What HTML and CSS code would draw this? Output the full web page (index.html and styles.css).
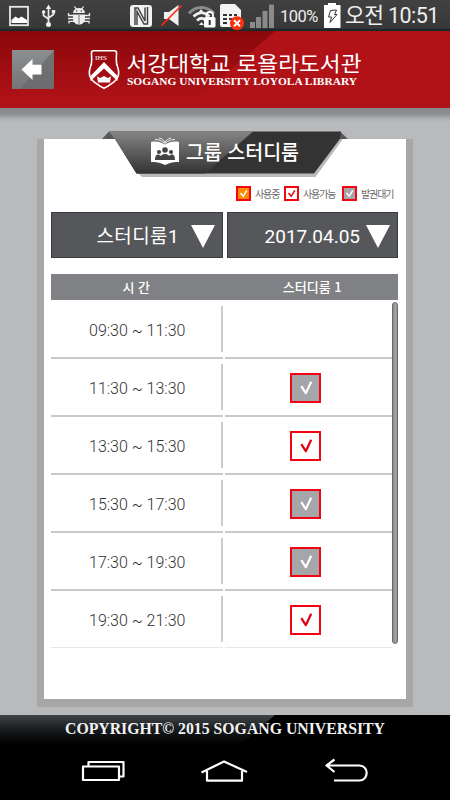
FILE: index.html
```html
<!DOCTYPE html>
<html lang="ko">
<head>
<meta charset="utf-8">
<title>그룹 스터디룸</title>
<link rel="stylesheet" href="styles.css">
</head>
<body>
<svg width="0" height="0" class="defs" aria-hidden="true">
  <symbol id="check" viewBox="0 0 31 30"><path d="M11.300 13.200l4.500 7 5.400-11.400" fill="none" stroke="currentColor" stroke-width="2.200" stroke-linejoin="round"/></symbol>
  <symbol id="check-sm" viewBox="0 0 15 15"><path d="M4.500 7l2.700 3.300 3.600-6" fill="none" stroke="currentColor" stroke-width="1.500"/></symbol>
</svg>
<div class="status">
  <svg class="i-pic" viewBox="9 0 20 31"><rect x="10" y="6.800" width="18" height="18.400" fill="none" stroke="#e8e8e8" stroke-width="1.800"/><path d="M11.500 23v-3l4-3.500 3 2 3-2 5.500 3.500v3z" fill="#fff"/></svg>
  <svg class="i-usb" viewBox="41 0 15 31"><g fill="none" stroke="#e8e8e8" stroke-width="1.700"><path d="M48.500 8v17M43.500 11v4.500l5 3.500M53.500 11v3.500l-5 3.500"/></g><path d="M48.500 4.500l2.700 4.500h-5.400z" fill="#eee"/><circle cx="48.500" cy="24.500" r="2.500" fill="#eee"/><circle cx="43.700" cy="12" r="1.800" fill="#eee"/><rect x="51.800" y="10" width="3.400" height="3.400" fill="#eee"/></svg>
  <svg class="i-bug" viewBox="67 0 24 31"><path d="M73 13a6 5 0 0 1 12 0zM73 14.500h12v4c0 8-12 8-12 0z" fill="#eee"/><path d="M74.500 6.500l2 3M83.500 6.500l-2 3M68.500 13v2.500h5M89.500 13v2.500h-5M68 18.500h22M69 23.500v-2.200h5M89 23.500v-2.200h-5" fill="none" stroke="#eee" stroke-width="1.300"/><path d="M79 15v9" stroke="#555" stroke-width=".8"/><circle cx="76.700" cy="11" r=".8" fill="#444"/><circle cx="81.300" cy="11" r=".8" fill="#444"/></svg>
  <svg class="i-nfc" viewBox="130 0 22 31"><rect x="130" y="5" width="22" height="22" rx="3" fill="#f2f2f2"/><path d="M135 25V8l3 0 7 13V7.500M147.500 7v17l-3.500 0-7-12.500V25" fill="none" stroke="#3c3c3c" stroke-width="1.400"/></svg>
  <svg class="i-mute" viewBox="160 0 23 31"><path d="M164 12h5l9.500-7v21l-9.500-7h-5z" fill="#f0f0f0"/><path d="M161.500 25.500l20-20" stroke="#ff2a16" stroke-width="1.700"/></svg>
  <svg class="i-wifi" viewBox="188 0 28 31"><g fill="none"><path d="M189 13.500c7-8 18-8 25 0" stroke="#8c8c8c" stroke-width="3"/><path d="M193.500 16.500c5-5 11-5 16 0M197 20.500c3-3 6-3 9 0" stroke="#eee" stroke-width="2.600"/></g><path d="M198 13l3-4 3 4zM199 25l2.500-3 2.500 3z" fill="#eee"/><rect x="204" y="17" width="11.500" height="10.500" rx="1.500" fill="#fff"/><path d="M206.500 17.500v-2.500c0-4 6.500-4 6.500 0v2.500" fill="none" stroke="#fff" stroke-width="1.800"/><path d="M209.700 20v5" stroke="#333" stroke-width="2"/></svg>
  <svg class="i-sim" viewBox="220 0 25 31"><path d="M222 4h13l6 6v17h-19a2 2 0 0 1-2-2V6a2 2 0 0 1 2-2z" fill="#f4f4f4"/><path d="M223 15h4M229 15h3M234 15h3M223 19h4M229 19h3M223 23h4" stroke="#333" stroke-width="2"/><circle cx="237" cy="23.300" r="7" fill="#f9300c"/><path d="M234 20.300l6 6M240 20.300l-6 6" stroke="#fff" stroke-width="2"/></svg>
  <svg class="i-signal" viewBox="250 0 24 31"><path d="M250 22h5v6h-5zM256 17h5v11h-5zM262.500 11h5v17h-5zM269 4.500h5V28h-5z" fill="#8a8a8a"/></svg>
  <span class="pct">100%</span>
  <svg class="i-bat" viewBox="324 0 17 31"><path d="M328 3h8v2h4.500v23H324V5h4z" fill="#fff"/><path d="M330.500 10.500l6-.5-2 4.500h2.500l-7 8 1.500-5.500h-3z" fill="none" stroke="#333" stroke-width="1"/></svg>
  <span class="clock">오전 10:51</span>
</div>
<header class="top">
  <button class="back" aria-label="뒤로"><svg viewBox="12 50 42 39"><path d="M54 50v39H20z" fill="#6a6a6c" opacity=".75"/><path d="M21.500 69.500l11-10.500v5.700h9v9.800h-9v5.500z" fill="#fff"/></svg></button>
  <svg class="brand" viewBox="88 45 280 50" width="280" height="50">
    <path d="M93.500 50.800h21c1.200 0 2 .8 2 2 0 7-1 9 1 14 3 8-.5 13-3.500 15-3.500 2.500-6 4.500-10 6.500-4-2-6.500-4-10-6.500-3-2-6.500-7-3.500-15 2-5 1-7 1-14 0-1.200.8-2 2-2z" fill="none" stroke="#fff" stroke-width="1.600"/>
    <path d="M90.500 76l13.500-14 13.500 14v5l-13.500-12.500-13.500 12.500z" fill="#fff"/>
    <path d="M97 76.500l3.500 1.500 3.500-2 3.500 2 3.500-1.500-1 6h-12z" fill="#fff"/>
    <text class="ihs" x="95" y="60" textLength="12" lengthAdjust="spacingAndGlyphs">IHS</text>
    <text class="brand-ko" x="126.500" y="70.500" textLength="235" lengthAdjust="spacingAndGlyphs">서강대학교 로욜라도서관</text>
    <text class="brand-en" x="127" y="84.700" textLength="230" lengthAdjust="spacingAndGlyphs">SOGANG UNIVERSITY LOYOLA LIBRARY</text>
  </svg>
</header>
<main>
  <section class="card">
    <div class="ribbon">
      <svg viewBox="101 131 248 46" width="248" height="46">
        <defs><linearGradient id="rb" x1="0" y1="0" x2="0" y2="1"><stop offset="0" stop-color="#858585"/><stop offset="1" stop-color="#333"/></linearGradient></defs>
        <path d="M138 173h175l27-34h3l-27.500 38H142z" fill="#b9babc"/>
        <path d="M102 139l7-7.500 6 7.500zM340 131.500l8 7.500h-9z" fill="#57585c"/>
        <path d="M109 131.500h232l-1 7.500-26 34.500H136.500L115 139z" fill="#333"/>
        <path d="M109 131.500h144L205 173.500h-68.500L115 139z" fill="url(#rb)"/>
        <path d="M151 142c5-1 10 0 14 2.500 4-2.500 9-3.500 14-2.500v20c-5 0-9 .500-14 3-5-2.500-9-3-14-3z" fill="#fff"/>
        <path d="M155 139.500c4 0 7 1 10 4M159 138c3 .500 5 2 6 5M175 139.500c-4 0-7 1-10 4M171 138c-3 .500-5 2-6 5" fill="none" stroke="#eee"/>
        <g fill="#444"><circle cx="165" cy="150" r="2.800"/><path d="M160 160c-1-8 11-8 10 0z"/><circle cx="159" cy="152" r="2.100"/><circle cx="171" cy="152" r="2.100"/><path d="M155 160c0-7 4-6 6-4v4zM175 160c0-7-4-6-6-4v4z"/></g>
        <text class="ribbon-t" x="186" y="160" textLength="113" lengthAdjust="spacingAndGlyphs">그룹 스터디룸</text>
      </svg>
    </div>
    <ul class="legend">
      <li><i class="box sm using"><svg><use href="#check-sm"/></svg></i><span>사용중</span></li>
      <li><i class="box sm free"><svg><use href="#check-sm"/></svg></i><span>사용가능</span></li>
      <li><i class="box sm wait"><svg><use href="#check-sm"/></svg></i><span>발권대기</span></li>
    </ul>
    <div class="selects">
      <div class="select room"><span>스터디룸1</span><svg class="tri" viewBox="0 0 24 23"><path d="M0 0h24L12 23z" fill="#fff"/></svg></div>
      <div class="select date"><span>2017.04.05</span><svg class="tri" viewBox="0 0 24 23"><path d="M0 0h24L12 23z" fill="#fff"/></svg></div>
    </div>
    <div class="thead"><span>시 간</span><span>스터디룸 1</span></div>
    <div class="tbody">
      <div class="rows">
        <div class="row"><div class="time">09:30 ~ 11:30</div><div class="state"></div></div>
        <div class="row"><div class="time">11:30 ~ 13:30</div><div class="state"><i class="box wait"><svg><use href="#check"/></svg></i></div></div>
        <div class="row"><div class="time">13:30 ~ 15:30</div><div class="state"><i class="box free"><svg><use href="#check"/></svg></i></div></div>
        <div class="row"><div class="time">15:30 ~ 17:30</div><div class="state"><i class="box wait"><svg><use href="#check"/></svg></i></div></div>
        <div class="row"><div class="time">17:30 ~ 19:30</div><div class="state"><i class="box wait"><svg><use href="#check"/></svg></i></div></div>
        <div class="row last"><div class="time">19:30 ~ 21:30</div><div class="state"><i class="box free"><svg><use href="#check"/></svg></i></div></div>
      </div>
      <div class="scroll"></div>
    </div>
  </section>
</main>
<footer class="copy">
  <svg viewBox="0 0 450 32" width="450" height="32"><text x="65" y="19" textLength="320" lengthAdjust="spacingAndGlyphs">COPYRIGHT© 2015 SOGANG UNIVERSITY</text></svg>
</footer>
<nav class="nav">
  <svg viewBox="0 747 450 53" width="450" height="53"><g fill="none" stroke="#fff" stroke-width="2.200" stroke-linejoin="round">
    <rect x="83" y="766.500" width="36" height="13.500"/><path d="M88.500 766v-4h35v14.500H120"/>
    <path d="M201.500 772.500l22.500-11 23 10.500M207 771v9.700h35V771"/>
    <path d="M334 780.500h25.500c9.500 0 9.500-15 0-15H327M334.500 759.500l-8 6 8 6.500"/></g></svg>
</nav>
</body>
</html>
```

FILE: styles.css
```css
* { box-sizing: border-box; }
body { margin: 0; width: 450px; height: 800px; overflow: hidden; background: #b9babc; font-family: Roboto, "Noto Sans CJK KR", sans-serif; }
svg { display: block; }
.defs { position: absolute; }

.status { display: flex; height: 31px; background: linear-gradient(#414141, #383838 90%, #16282c 97%); color: #eee; padding-left: 9px; }
.status svg { height: 31px; flex: none; }
.i-pic { width: 20px; }
.i-usb { width: 15px; margin-left: 12px; }
.i-bug { width: 24px; margin-left: 11px; }
.i-nfc { width: 22px; margin-left: 39px; }
.i-mute { width: 23px; margin-left: 8px; }
.i-wifi { width: 28px; margin-left: 5px; }
.i-sim { width: 25px; margin-left: 4px; }
.i-signal { width: 24px; margin-left: 5px; }
.i-bat { width: 17px; }
.pct { width: 44px; margin-left: 6px; font-size: 16.5px; line-height: 33px; letter-spacing: -0.5px; }
.clock { margin-left: 4px; font-size: 21.5px; line-height: 31px; letter-spacing: -0.6px; white-space: nowrap; }

.top { display: flex; align-items: flex-start; height: 77px; padding: 14px 0 0 12px; background: #b01217; position: relative; }
.top::before { content: ""; position: absolute; inset: 0; background: linear-gradient(#8a070b, #b01217 90%); clip-path: polygon(0 0, 275px 0, 187px 100%, 0 100%); }
.top > * { position: relative; }
.back { width: 42px; height: 39px; margin-top: 5px; padding: 0; border: 0; background: linear-gradient(#8d8e90, #747577); }
.back svg { width: 42px; height: 39px; }
.brand { margin-left: 34px; }
.brand text { fill: #fff; }
.brand-ko { font: 400 21px Lato, "Noto Sans CJK KR", sans-serif; }
.brand-en { font: bold 10.5px "Liberation Serif", serif; }
.ihs { font: 7px "Liberation Serif", serif; }

main { height: 607px; padding: 31px 37px 0; background: linear-gradient(#88898c 0, #8d8e91 6px, #b0b1b3 11px, #b9babc 14px); }
.card { display: flow-root; height: 568px; border: solid #a7a7a7; border-width: 0 7px 8px; background: #fff; padding: 0 8px 0 7px; }
.ribbon { height: 38px; margin: -8px 0 0 50px; }
.ribbon-t { font: 500 20px "Noto Sans CJK KR", sans-serif; fill: #fff; }

.legend { display: flex; list-style: none; margin: 0 0 0 185px; padding: 17px 0 0; height: 43px; }
.legend li { display: flex; }
.legend li:nth-child(1) { width: 48px; }
.legend li:nth-child(2) { width: 58px; }
.legend span { margin-left: 4px; font: 10px/15px "Noto Sans CJK KR", sans-serif; letter-spacing: -1.1px; color: #666; white-space: nowrap; }
.box { display: block; flex: none; width: 31px; height: 30px; border: 2px solid #f20510; }
.box svg { width: 31px; height: 30px; margin: -2px; }
.box.sm { width: 15px; height: 15px; }
.box.sm svg { width: 15px; height: 15px; }
.wait { background: #a5a6aa; color: #fff; }
.using { background: #ff8c00; color: #fff; }
.free { background: #fff; color: #e20010; }

.selects { display: flex; gap: 4px; height: 46px; }
.select { width: 172px; border: 1px solid #3b3b42; background: #56575b; color: #fff; font-size: 19px; line-height: 47px; display: flex; justify-content: flex-end; }
.room span { letter-spacing: 0.4px; }
.date { width: 171px; }
.tri { width: 24px; height: 23px; margin: 12px 7px 0 12px; }
.date .tri { margin-left: 6px; }

.thead { display: flex; height: 26px; margin-top: 16px; background: #808184; color: #fff; font: 500 13px/25px "Noto Sans CJK KR", sans-serif; text-align: center; }
.thead span:first-child { width: 172px; }
.thead span:last-child { width: 178px; padding-left: 5px; }
.tbody { display: flex; margin-top: 1px; }
.rows { width: 341px; }
.row { display: grid; grid-template-columns: 172px 167px; column-gap: 2px; height: 58px; }
.row > div { border-bottom: 2px solid #c9c9c9; }
.time { display: flex; align-items: center; padding: 2px 0 0 38px; font-size: 16px; font-weight: 300; color: #333; background: linear-gradient(#ccc, #ccc) 170px 5px / 2px 46px no-repeat; }
.state { display: flex; justify-content: center; align-items: center; padding-right: 6px; padding-top: 2px; }
.row.last { height: 57px; }
.row.last > div { border-bottom: 1px solid #e6e6e6; }
.scroll { width: 6px; height: 342px; margin-top: 1px; border: 1px solid #6b6b6b; border-radius: 3px; background: linear-gradient(90deg, #888, #aaa 70%, #888); }

.copy { height: 32px; position: relative; background: #000; }
.copy::before { content: ""; position: absolute; inset: 0; background: linear-gradient(#414345, #15191b 50%, #000 90%); clip-path: polygon(0 0, 275px 0, 238px 100%, 0 100%); }
.copy svg { position: relative; }
.copy text { font: bold 16px "Liberation Serif", serif; fill: #f2f2f2; }
.nav { height: 53px; background: #000; }
```
